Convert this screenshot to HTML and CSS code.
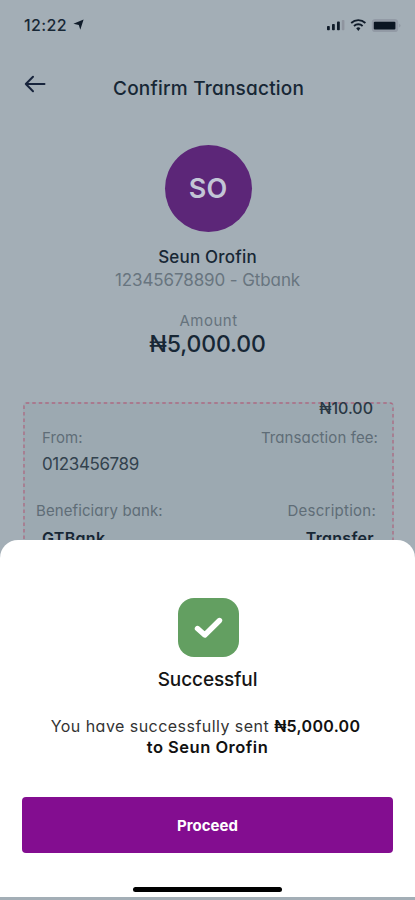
FILE: index.html
```html
<!DOCTYPE html>
<html lang="en">
<head>
<meta charset="utf-8">
<title>Confirm Transaction</title>
<link rel="stylesheet" href="styles.css">
</head>
<body>
<div class="screen">
  <div class="status">
    <span class="clock">12:22</span>
    <svg class="locate" width="11" height="12" viewBox="0 0 11 12"><path d="M10.6 .6 7.3 10.8 5.8 6.1 .4 4.7Z"/></svg>
    <svg class="signals" width="77" height="16" viewBox="0 0 77 16">
      <g fill="#101c2a"><rect x="2" y="9" width="2.8" height="4.2" rx=".8"/><rect x="7" y="7" width="2.8" height="6.2" rx=".8"/><rect x="12" y="4.6" width="2.8" height="8.6" rx=".8"/></g>
      <rect x="16.8" y="3" width="2.6" height="10.2" rx=".8" fill="#8f959f"/>
      <g fill="none" stroke="#101c2a" stroke-width="1.8"><path d="M26.200 6a10.400 10.400 0 0 1 14.200 0M29 9a6.200 6.200 0 0 1 8.600 0"/></g>
      <path d="M31.200 11.200a3.200 3.200 0 0 1 4.200 0l-2.100 2.700Z" fill="#101c2a"/>
      <rect x="46.800" y="2" width="26.400" height="13" rx="3.600" fill="#929aa5"/><rect x="48.800" y="4.800" width="21.600" height="7.600" rx="1" fill="#0b1622"/><path d="M74 6.700q1.600.5 1.600 1.900t-1.600 1.900Z" fill="#929aa5"/>
    </svg>
  </div>
  <header class="header">
    <svg class="back" width="22" height="18" viewBox="0 0 22 18"><path d="M20.500 9H1.800M9 1.800 1.800 9 9 16.200"/></svg>
    <h1 class="title">Confirm Transaction</h1>
  </header>
  <section class="payee">
    <div class="avatar"><span>SO</span></div>
    <div class="name">Seun Orofin</div>
    <div class="account">12345678890 - Gtbank</div>
    <div class="amount-label">Amount</div>
    <div class="amount">₦5,000.00</div>
  </section>
  <section class="details">
    <svg class="outline" width="371" height="150" viewBox="0 0 371 150"><path d="M1 150V4Q1 1 4 1H367Q370 1 370 4V150"/></svg>
    <div class="col">
      <div class="label from">From:</div>
      <div class="number">0123456789</div>
      <div class="label bank-label">Beneficiary bank:</div>
      <div class="strong bank">GTBank</div>
    </div>
    <div class="col right">
      <div class="fee">₦10.00</div>
      <div class="label fee-label">Transaction fee:</div>
      <div class="label desc-label">Description:</div>
      <div class="strong desc">Transfer</div>
    </div>
  </section>
  <section class="sheet">
    <div class="check"><svg width="61" height="59" viewBox="0 0 61 59"><path d="M19.500 30.500 26.800 37 41.500 22.500"/></svg></div>
    <h2 class="result">Successful</h2>
    <p class="message"><span class="line1">You have successfully sent <b>₦5,000.00</b></span><b class="line2">to Seun Orofin</b></p>
    <button class="proceed"><span>Proceed</span></button>
    <div class="home"></div>
  </section>
</div>
</body>
</html>
```
FILE: styles.css
```css
* { box-sizing: border-box; margin: 0; padding: 0; }
body { background: #a3aeb6; font-family: Inter, "Liberation Sans", sans-serif; font-feature-settings: "cv11"; }
.screen { width: 415px; height: 900px; overflow: hidden; display: flex; flex-direction: column; color: #172735; white-space: nowrap; position: relative; }
.status { height: 50px; flex: none; display: flex; align-items: center; padding: 0 13px 0 24px; }
.clock { font-size: 16px; font-weight: 500; line-height: 20px; letter-spacing: .4px; }
.locate { margin-left: 6px; fill: #101c2a; }
.signals { margin-left: auto; }
.header { height: 95px; flex: none; display: flex; padding-left: 24px; }
.back { margin-top: 25px; fill: none; stroke: #17243c; stroke-width: 2; stroke-linecap: round; stroke-linejoin: round; }
.title { margin: 27px 0 0 67px; font-size: 19px; font-weight: 450; line-height: 24px; letter-spacing: .22px; }
.payee { height: 257px; flex: none; display: flex; flex-direction: column; align-items: center; }
.avatar { width: 87px; height: 87px; margin-left: 1px; border-radius: 50%; background: #5c2678; color: #c3c5d6; display: flex; align-items: center; justify-content: center; font-size: 27px; font-weight: 600; }
.name { margin-top: 14px; font-size: 17px; font-weight: 500; line-height: 22px; letter-spacing: .2px; }
.account { margin-top: 1px; font-size: 17px; line-height: 22px; letter-spacing: -.1px; color: #68757f; }
.amount-label { margin: 20px 0 0 2px; font-size: 15px; line-height: 20px; letter-spacing: .5px; color: #66737d; }
.amount { font-size: 23px; font-weight: 500; line-height: 26px; letter-spacing: -.1px; }
.details { height: 138px; width: 371px; margin-left: 23px; flex: none; display: flex; justify-content: space-between; background: #9ca9b1; border-radius: 4px 4px 0 0; position: relative; }
.outline { position: absolute; left: 0; top: 0; fill: none; stroke: #ad6a82; stroke-width: 1.3; stroke-dasharray: 3.5 3; }
.col { position: relative; display: flex; flex-direction: column; align-items: flex-start; padding-left: 14px; }
.right { align-items: flex-end; padding: 0 16px 0 0; }
.label { font-size: 15px; line-height: 20px; letter-spacing: .1px; color: #5f6d77; }
.number { margin: 6px 0 0 5px; font-size: 17px; line-height: 20px; letter-spacing: -.4px; color: #33424e; }
.from { margin: 26px 0 0 5px; }
.bank-label { margin: 27px 0 0 -1px; }
.strong { font-size: 16px; line-height: 20px; font-weight: 600; margin-top: 7px; letter-spacing: .3px; }
.bank { margin-left: 5px; }
.fee { margin: -4px 5px 0 0; font-size: 16px; line-height: 20px; font-weight: 500; color: #2a3844; }
.fee-label { margin-top: 10px; }
.desc-label { margin: 53px 2px 0 0; letter-spacing: .25px; }
.desc { margin-right: 4px; }
.sheet { height: 357px; flex: none; background: #fff; border-radius: 18px 18px 0 0; display: flex; flex-direction: column; align-items: center; color: #151515; position: relative; }
.check { margin: 58px 0 0 2px; width: 61px; height: 59px; border-radius: 16px; background: #639f61; }
.check svg { display: block; fill: none; stroke: #fff; stroke-width: 5.400; stroke-linecap: round; stroke-linejoin: round; }
.result { margin-top: 11px; font-size: 19px; font-weight: 450; line-height: 24px; letter-spacing: -.1px; }
.message { margin-top: 24px; font-size: 16px; line-height: 21px; display: flex; flex-direction: column; align-items: center; color: #333; }
.message b { font-weight: 600; color: #111; }
.line1 { margin-right: 4px; letter-spacing: .46px; }
.line1 b { letter-spacing: .3px; }
.message .line2 { font-size: 16.5px; letter-spacing: .5px; }
.proceed { margin-top: 39px; width: 371px; height: 56px; border: 0; border-radius: 4px; background: #830d90; color: #fff; font: 700 15px/20px Inter, sans-serif; }
.proceed span { position: relative; top: 1px; }
.home { margin-top: 34px; width: 149px; height: 5px; border-radius: 3px; background: #000; }
```
